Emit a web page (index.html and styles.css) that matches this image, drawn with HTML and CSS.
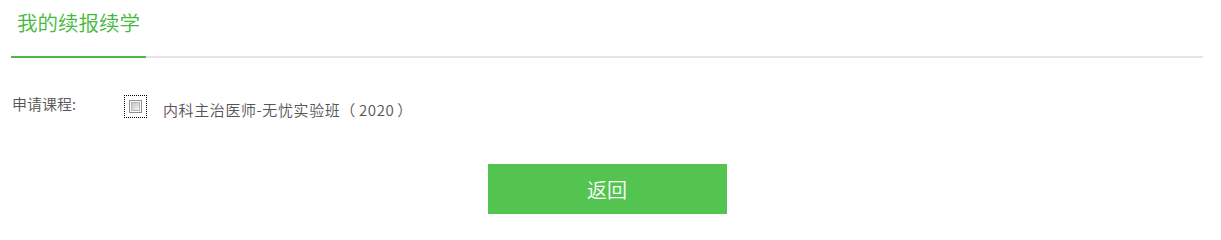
FILE: index.html
```html
<!DOCTYPE html>
<html lang="zh-CN">
<head>
<meta charset="utf-8">
<title>我的续报续学</title>
<link rel="stylesheet" href="styles.css">
</head>
<body>
<div class="page">
  <div class="tabs">
    <div class="tab active">我的续报续学</div>
  </div>
  <div class="row">
    <div class="label">申请课程:</div>
    <label class="check-wrap"><span class="check"><span class="check-inner"></span></span></label>
    <div class="course">内科主治医师-无忧实验班<span class="year">（<span class="num">2020</span>）</span></div>
  </div>
  <div class="actions">
    <button class="btn" type="button">返回</button>
  </div>
</div>
</body>
</html>
```

FILE: styles.css
```css
html, body {
  margin: 0;
  padding: 0;
  background: #fff;
}
body {
  font-family: "Noto Sans CJK SC", "Noto Sans", sans-serif;
  font-weight: 350;
  color: #555;
}
.page {
  width: 1192px;
  margin-left: 11px;
}
.tabs {
  display: flex;
  border-bottom: 2px solid #e5e5e5;
  height: 56px;
}
.tab {
  width: 135px;
  height: 56px;
  box-sizing: border-box;
  text-align: center;
  font-size: 20.5px;
  line-height: 44px;
  color: #44b83a;
  white-space: nowrap;
}
.tab.active {
  border-bottom: 2px solid #4cb846;
  height: 58px;
}
.row {
  display: flex;
  align-items: flex-start;
  margin-top: 36px;
  padding-left: 1px;
  height: 26px;
}
.label {
  width: 112px;
  font-size: 15px;
  line-height: 20px;
  color: #555;
}
.check-wrap {
  width: 21px;
  height: 21px;
  margin-top: 1px;
  border: 1px dotted #000;
  display: flex;
  align-items: center;
  justify-content: center;
}
.check {
  width: 13px;
  height: 13px;
  box-sizing: border-box;
  border: 1px solid #8e8f8f;
  background: #fdfdfd;
  display: flex;
  align-items: center;
  justify-content: center;
}
.check-inner {
  width: 9px;
  height: 9px;
  background: linear-gradient(135deg, #c4c4c4 0%, #dedede 55%, #f4f4f4 100%);
  border: 1px solid #b4b4b4;
  box-sizing: border-box;
}
.course {
  margin-left: 16px;
  margin-top: 6px;
  font-size: 15px;
  line-height: 20px;
  color: #555;
  white-space: nowrap;
  letter-spacing: 0.6px;
}
.num {
  padding: 0 3px;
}
.actions {
  display: flex;
  justify-content: center;
  margin-top: 44px;
}
.btn {
  width: 239px;
  height: 50px;
  border: 0;
  background: #52c44f;
  color: #fff;
  font-family: "Noto Sans CJK SC", "Noto Sans", sans-serif;
  font-weight: 350;
  font-size: 20px;
  padding: 0;
  cursor: pointer;
}
```
